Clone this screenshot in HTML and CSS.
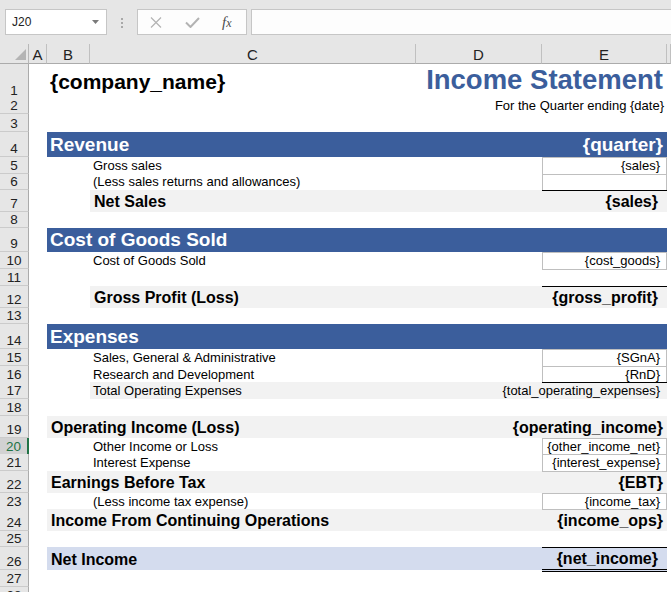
FILE: index.html
```html
<!DOCTYPE html>
<html>
<head>
<meta charset="utf-8">
<title>Income Statement</title>
<link rel="stylesheet" href="styles.css">
</head>
<body>
<div class="fbar">
  <div class="namebox"><span>J20</span><svg class="dd" width="7" height="4" viewBox="0 0 7 4"><polygon points="0,0 7,0 3.5,4" fill="#7a7a7a"/></svg></div>
  <div class="dots"><i></i><i></i><i></i></div>
  <div class="fbtns">
    <svg class="ic-x" width="12" height="11" viewBox="0 0 12 11"><path d="M1 0.5 L11 10.5 M11 0.5 L1 10.5" stroke="#b3b3b3" stroke-width="1.2" fill="none"/></svg>
    <svg class="ic-ok" width="15" height="11" viewBox="0 0 15 11"><path d="M1 5.5 L5.5 10 L14 1" stroke="#b3b3b3" stroke-width="2" fill="none"/></svg>
    <span class="fx"><i>f</i><i class="fxx">x</i></span>
  </div>
  <div class="finput"></div>
</div>
<div class="sheet">
  <div class="row colhead">
    <div class="corner"><svg width="28" height="19" viewBox="0 0 28 19"><polygon points="26,5 26,16 15,16" fill="#b4b4b4"/></svg></div>
    <div class="ch">A</div><div class="ch">B</div><div class="ch">C</div><div class="ch">D</div><div class="ch">E</div><div class="ch"></div>
  </div>

  <div class="row h34"><div class="rh">1</div>
    <div class="cell g-bc company">{company_name}</div>
    <div class="cell g-de right title">Income Statement</div>
  </div>
  <div class="row h16"><div class="rh">2</div>
    <div class="cell g-de right subt">For the Quarter ending {date}</div>
  </div>
  <div class="row h18"><div class="rh">3</div></div>
  <div class="row h25"><div class="rh">4</div>
    <div class="cell g-be sec"><span>Revenue</span><span>{quarter}</span></div>
  </div>
  <div class="row h17"><div class="rh">5</div>
    <div class="cell g-c">Gross sales</div>
    <div class="cell g-e right box">{sales}</div>
  </div>
  <div class="row h16"><div class="rh">6</div>
    <div class="cell g-c">(Less sales returns and allowances)</div>
    <div class="cell g-e right box"></div>
  </div>
  <div class="row h22"><div class="rh">7</div>
    <div class="cell g-cd gray bold sub">Net Sales</div>
    <div class="cell g-e gray bold right t-blk pr9">{sales}</div>
  </div>
  <div class="row h16"><div class="rh">8</div></div>
  <div class="row h24"><div class="rh">9</div>
    <div class="cell g-be sec"><span>Cost of Goods Sold</span></div>
  </div>
  <div class="row h17"><div class="rh">10</div>
    <div class="cell g-c">Cost of Goods Sold</div>
    <div class="cell g-e right box">{cost_goods}</div>
  </div>
  <div class="row h17"><div class="rh">11</div>
    <div class="cell g-e t-gry"></div>
  </div>
  <div class="row h22"><div class="rh">12</div>
    <div class="cell g-cd gray bold sub">Gross Profit (Loss)</div>
    <div class="cell g-e gray bold right t-blk pr9">{gross_profit}</div>
  </div>
  <div class="row h16"><div class="rh">13</div></div>
  <div class="row h25"><div class="rh">14</div>
    <div class="cell g-be sec"><span>Expenses</span></div>
  </div>
  <div class="row h17"><div class="rh">15</div>
    <div class="cell g-c">Sales, General &amp; Administrative</div>
    <div class="cell g-e right box">{SGnA}</div>
  </div>
  <div class="row h16"><div class="rh">16</div>
    <div class="cell g-c">Research and Development</div>
    <div class="cell g-e right box">{RnD}</div>
  </div>
  <div class="row h17"><div class="rh">17</div>
    <div class="cell g-cd gray">Total Operating Expenses</div>
    <div class="cell g-e gray right t-blk pr7">{total_operating_expenses}</div>
  </div>
  <div class="row h17"><div class="rh">18</div></div>
  <div class="row h22"><div class="rh">19</div>
    <div class="cell g-be gray bold lead sb"><span>Operating Income (Loss)</span><span>{operating_income}</span></div>
  </div>
  <div class="row h16"><div class="rh sel">20</div>
    <div class="cell g-c">Other Income or Loss</div>
    <div class="cell g-e right box">{other_income_net}</div>
  </div>
  <div class="row h17"><div class="rh">21</div>
    <div class="cell g-c">Interest Expense</div>
    <div class="cell g-e right box">{interest_expense}</div>
  </div>
  <div class="row h22"><div class="rh">22</div>
    <div class="cell g-bd gray bold lead">Earnings Before Tax</div>
    <div class="cell g-e gray bold right t-gry pr4">{EBT}</div>
  </div>
  <div class="row h16"><div class="rh">23</div>
    <div class="cell g-c">(Less income tax expense)</div>
    <div class="cell g-e right box">{income_tax}</div>
  </div>
  <div class="row h22"><div class="rh">24</div>
    <div class="cell g-bd gray bold lead">Income From Continuing Operations</div>
    <div class="cell g-e gray bold right t-gry pr4">{income_ops}</div>
  </div>
  <div class="row h16"><div class="rh">25</div></div>
  <div class="row h23"><div class="rh">26</div>
    <div class="cell g-bd lblue bold lead">Net Income</div>
    <div class="cell g-e lblue bold right t-blk dbl pr9">{net_income}</div>
  </div>
  <div class="row h17"><div class="rh">27</div></div>
  <div class="row h17"><div class="rh">28</div></div>
</div>
</body>
</html>
```

FILE: styles.css
```css
* { box-sizing: border-box; margin: 0; padding: 0; }
html, body { width: 671px; height: 592px; overflow: hidden; background: #fff; }
body { font-family: "Liberation Sans", Arial, sans-serif; color: #000; font-size: 13px; }

/* formula bar */
.fbar { height: 44px; background: #e6e6e6; display: flex; align-items: flex-start; padding: 9px 0 0 5px; }
.namebox { width: 102px; height: 26px; background: #fff; border: 1px solid #c6c6c6; display: flex; align-items: center; justify-content: space-between; padding: 0 7px 0 6px; font-size: 12px; color: #222; }
.dots { width: 30px; height: 26px; display: flex; flex-direction: column; align-items: center; gap: 2px; padding-top: 9px; }
.dots i { display: block; width: 2px; height: 2px; background: #a8a8a8; }
.fbtns { width: 110px; height: 26px; background: #fdfdfd; border: 1px solid #c6c6c6; display: flex; align-items: center; }
.ic-x { margin-left: 12px; }
.ic-ok { margin-left: 23px; }
.fx { margin-left: 22px; font-family: "Liberation Serif", serif; color: #4d4d4d; font-size: 15px; }
.fxx { font-size: 12px; }
.finput { flex: 1; height: 26px; margin-left: 4px; margin-right: -2px; background: #fdfdfd; border: 1px solid #c6c6c6; }

/* grid */
.row { display: grid; grid-template-columns: 29px 18px 43px 326px 126px 125px 1fr; }
.colhead { height: 20px; background: #e6e6e6; }
.corner { border-right: 1px solid #b8b8b8; border-bottom: 1px solid #ababab; }
.corner svg { display: block; }
.ch { border-right: 1px solid #c0c0c0; border-bottom: 1px solid #ababab; display: flex; align-items: center; justify-content: center; font-size: 15px; color: #222; padding-top: 1px; }

.h16 { height: 16px; } .h17 { height: 17px; } .h18 { height: 18px; }
.h22 { height: 22px; } .h23 { height: 23px; } .h24 { height: 24px; }
.h25 { height: 25px; } .h34 { height: 34px; }

.rh { grid-column: 1; background: #e6e6e6; border-right: 1px solid #ababab; border-bottom: 1px solid #cbcbcb; display: flex; align-items: flex-end; justify-content: center; font-size: 13.5px; color: #222; padding-bottom: 1px; line-height: 1; }
.rh.sel { background: #d2d2d2; color: #217346; border-right: 2px solid #217346; }

.g-bc { grid-column: 3 / 5; } .g-be { grid-column: 3 / 7; } .g-bd { grid-column: 3 / 6; }
.g-c { grid-column: 4; } .g-cd { grid-column: 4 / 6; } .g-de { grid-column: 5 / 7; }
.g-e { grid-column: 6; }

.cell { display: flex; align-items: flex-end; white-space: nowrap; padding: 0 3px 1px 3px; min-width: 0; }
.right { justify-content: flex-end; }
.sb { justify-content: space-between; }

.company { font-weight: bold; font-size: 21px; padding-bottom: 5px; }
.title { font-weight: bold; font-size: 27.5px; color: #3b5e9c; padding-right: 4px; padding-bottom: 3px; }
.subt { padding-right: 3px; }

.sec { background: #3b5e9c; color: #fff; font-weight: bold; font-size: 19px; justify-content: space-between; padding: 0 4px 1px 3px; }
.gray { background: #f2f2f2; }
.lblue { background: #d4dcee; }
.bold { font-weight: bold; font-size: 16px; }
.sub { padding-left: 4px; }
.lead { padding-left: 4px; }
.sb { padding-right: 4px; }

.box { border: 1px solid #bfbfbf; border-bottom: 0; padding-right: 6px; }
.t-blk { border-top: 1px solid #000; }
.t-gry { border-top: 1px solid #bfbfbf; }
.dbl { border-bottom: 3px double #000; margin-bottom: -2px; }
.pr9 { padding-right: 9px; }
.pr7 { padding-right: 7px; }
.pr4 { padding-right: 4px; }
```
